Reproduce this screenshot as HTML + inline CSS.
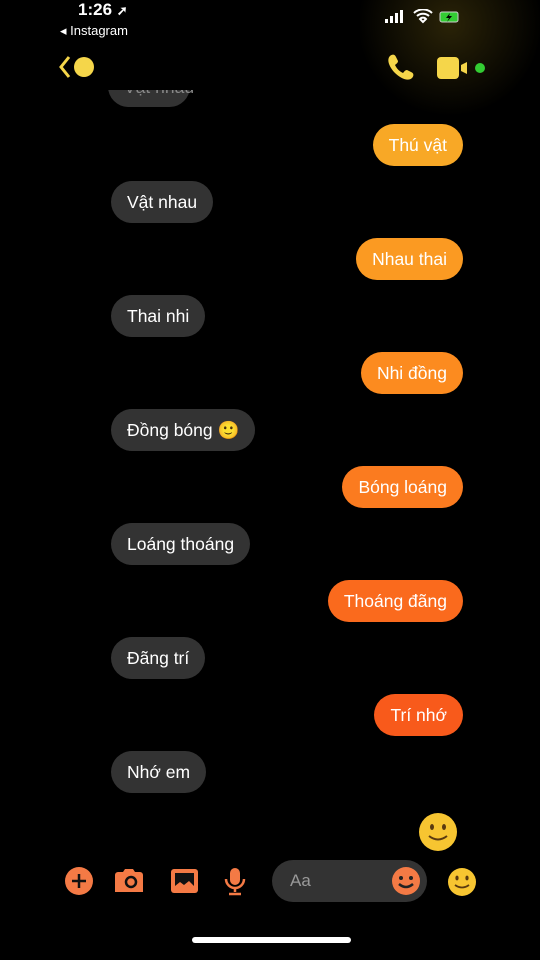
<!DOCTYPE html>
<html><head><meta charset="utf-8"><style>
body{margin:0;width:540px;height:960px;background:#000;position:relative;overflow:hidden;font-family:"Liberation Sans",sans-serif}
.b{position:absolute;height:42px;line-height:42px;border-radius:21px;color:#fff;font-size:17.5px;padding:0 16px;box-sizing:border-box;white-space:nowrap}
.l{left:111px;background:#333}
.r{right:77px}
.ic{position:absolute}
</style></head><body>
<div style="position:absolute;left:360px;top:-40px;width:180px;height:160px;background:radial-gradient(circle at 50% 40%,rgba(120,100,20,.35),rgba(0,0,0,0) 70%)"></div>
<div style="position:absolute;left:78px;top:0;color:#fff;font-size:17px;font-weight:bold">1:26 <span style="font-size:13px">➚</span></div>
<div style="position:absolute;left:60px;top:23px;color:#fff;font-size:13px">◂ Instagram</div>
<svg class="ic" style="left:383px;top:9px" width="96" height="16">
<rect x="2" y="10" width="3" height="4" fill="#fff"/><rect x="7" y="7" width="3" height="7" fill="#fff"/><rect x="12" y="4" width="3" height="10" fill="#fff"/><rect x="17" y="1" width="3" height="13" fill="#fff"/>
<path d="M40 13l-3-3a4 4 0 0 1 6 0z M34 7a9 9 0 0 1 12 0 M31 4a13 13 0 0 1 18 0" stroke="#fff" stroke-width="2" fill="#fff" fill-opacity="0"/>
<rect x="57" y="3" width="18" height="10" rx="2" fill="#3c3" stroke="#ccc"/><path d="M67 4l-4 5h3l-2 4 5-6h-3z" fill="#000"/>
</svg>
<div class="b l" style="top:66px;width:82px;left:108px;height:41px;color:#888">Vật nhau</div>
<div style="position:absolute;left:48px;top:60px;width:160px;height:30px;background:#000"></div>
<svg class="ic" style="left:56px;top:54px" width="40" height="28"><path d="M13 3L5 13l8 10" stroke="#f5d64a" stroke-width="3" fill="none"/><circle cx="28" cy="13" r="10" fill="#f5d64a"/></svg>
<svg class="ic" style="left:386px;top:52px" width="30" height="30"><path d="M4 4c2-2 5-2 6 1l2 4c0 2-2 3-3 4 2 4 4 6 8 8 1-1 2-3 4-3l4 2c3 1 3 4 1 6-4 4-12 0-17-5S0 8 4 4z" fill="#f5d64a"/></svg>
<svg class="ic" style="left:436px;top:56px" width="52" height="24"><rect x="1" y="1" width="22" height="22" rx="4" fill="#f5d64a"/><path d="M25 9l6-3v12l-6-3z" fill="#f5d64a"/><circle cx="44" cy="12" r="5" fill="#3c3"/></svg>
<div class="b r" style="top:124px;background:#f8a826">Thú vật</div>
<div class="b l" style="top:181px">Vật nhau</div>
<div class="b r" style="top:238px;background:#fb9a22">Nhau thai</div>
<div class="b l" style="top:295px">Thai nhi</div>
<div class="b r" style="top:352px;background:#fc8b1f">Nhi đồng</div>
<div class="b l" style="top:409px">Đồng bóng 🙂</div>
<div class="b r" style="top:466px;background:#fb7b1f">Bóng loáng</div>
<div class="b l" style="top:523px">Loáng thoáng</div>
<div class="b r" style="top:580px;background:#fa6a1d">Thoáng đãng</div>
<div class="b l" style="top:637px">Đãng trí</div>
<div class="b r" style="top:694px;background:#f85a1b">Trí nhớ</div>
<div class="b l" style="top:751px">Nhớ em</div>
<svg class="ic" style="left:418px;top:812px" width="40" height="40"><circle cx="20" cy="20" r="19" fill="#f7c531"/><ellipse cx="14" cy="15" rx="2" ry="3" fill="#5a3a10"/><ellipse cx="26" cy="15" rx="2" ry="3" fill="#5a3a10"/><path d="M11 24q9 7 18 0" stroke="#5a3a10" stroke-width="2" fill="none"/></svg>
<svg class="ic" style="left:64px;top:866px" width="190" height="32">
<circle cx="15" cy="15" r="14" fill="#f47a45"/><path d="M15 8v14M8 15h14" stroke="#111" stroke-width="2.5"/>
<path d="M54 6h5l2-3h8l2 3h5a3 3 0 0 1 3 3v17H51V9a3 3 0 0 1 3-3z" fill="#f47a45"/><circle cx="67" cy="16" r="5" stroke="#111" stroke-width="2.5" fill="none"/>
<rect x="107" y="3" width="27" height="24" rx="3" fill="#f47a45"/><path d="M111 7h19v13l-5-5-5 4-4-3-5 4z" fill="#111"/>
<rect x="166" y="2" width="10" height="17" rx="5" fill="#f47a45"/><path d="M162 13a9 9 0 0 0 18 0M171 22v4M165 28h12" stroke="#f47a45" stroke-width="2.5" fill="none"/>
</svg>
<div style="position:absolute;left:272px;top:860px;width:155px;height:42px;border-radius:21px;background:#333;color:#999;font-size:17px;line-height:42px;padding-left:18px;box-sizing:border-box">Aa</div>
<svg class="ic" style="left:391px;top:866px" width="30" height="30"><circle cx="15" cy="15" r="14" fill="#f47a45"/><circle cx="10" cy="12" r="2" fill="#222"/><circle cx="20" cy="12" r="2" fill="#222"/><path d="M8 18q7 6 14 0" stroke="#222" stroke-width="2.5" fill="none"/></svg>
<svg class="ic" style="left:447px;top:867px" width="30" height="30"><circle cx="15" cy="15" r="14" fill="#f7c531"/><ellipse cx="10" cy="11" rx="1.6" ry="2.4" fill="#5a3a10"/><ellipse cx="20" cy="11" rx="1.6" ry="2.4" fill="#5a3a10"/><path d="M8 18q7 5 14 0" stroke="#5a3a10" stroke-width="1.8" fill="none"/></svg>
<div style="position:absolute;left:192px;top:937px;width:159px;height:6px;border-radius:3px;background:#fff"></div>
</body></html>
